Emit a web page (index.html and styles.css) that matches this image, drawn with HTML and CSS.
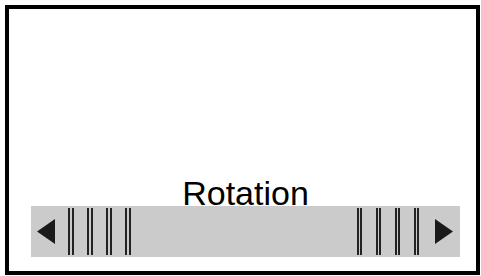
FILE: index.html
```html
<!DOCTYPE html>
<html>
<head>
<meta charset="utf-8">
<link rel="stylesheet" href="styles.css">
</head>
<body>
<div class="frame">
  <div class="label">Rotation</div>
  <div class="bar">
    <div class="group">
      <svg class="tri" width="18" height="25" viewBox="0 0 18 25"><polygon points="18,0 18,25 0,12.5" fill="#1a1a1a"/></svg>
      <div class="ticks">
        <span class="pair"></span><span class="pair"></span><span class="pair"></span><span class="pair"></span>
      </div>
    </div>
    <div class="group">
      <div class="ticks">
        <span class="pair"></span><span class="pair"></span><span class="pair"></span><span class="pair"></span>
      </div>
      <svg class="tri" width="18" height="25" viewBox="0 0 18 25"><polygon points="0,0 0,25 18,12.5" fill="#1a1a1a"/></svg>
    </div>
  </div>
</div>
</body>
</html>
```

FILE: styles.css
```css
html, body {
  margin: 0;
  padding: 0;
  background: #ffffff;
}
body {
  width: 481px;
  height: 276px;
  overflow: hidden;
}
.frame {
  box-sizing: border-box;
  margin: 5px 0 0 5px;
  width: 475px;
  height: 270px;
  border: 4px solid #000;
  display: flex;
  flex-direction: column;
  justify-content: flex-end;
  padding: 0 16px 14px 22px;
}
.label {
  font-family: "Liberation Sans", Arial, sans-serif;
  font-size: 34px;
  line-height: 26px;
  color: #000;
  text-align: center;
  margin-bottom: 0;
}
.bar {
  height: 51px;
  background: #cbcbcb;
  display: flex;
  justify-content: space-between;
  align-items: stretch;
  padding: 2px 7px 2px 6px;
  box-sizing: border-box;
}
.group {
  display: flex;
  align-items: center;
  gap: 13px;
}
.group:last-child {
  gap: 16px;
}
.tri {
  display: block;
}
.ticks {
  display: flex;
  gap: 13.5px;
  align-self: stretch;
}
.pair {
  display: block;
  width: 1.5px;
  border-left: 2.5px solid #222;
  border-right: 2.5px solid #222;
}
```
